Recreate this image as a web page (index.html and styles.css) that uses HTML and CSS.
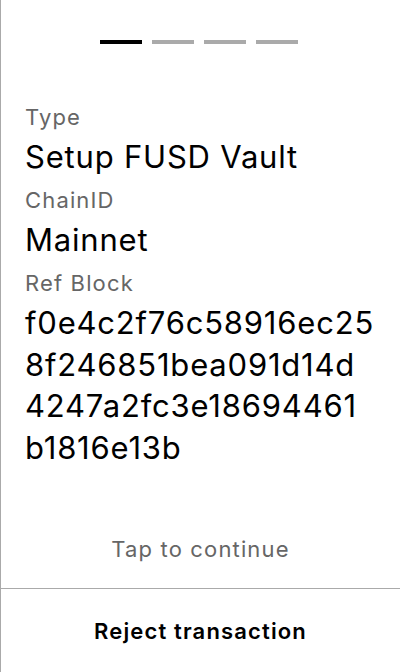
FILE: index.html
```html
<!DOCTYPE html>
<html>
<head>
<meta charset="utf-8">
<link rel="stylesheet" href="styles.css">
</head>
<body>
<div class="screen">
  <div class="steps">
    <span class="step active"></span>
    <span class="step"></span>
    <span class="step"></span>
    <span class="step"></span>
  </div>
  <div class="fields">
    <div class="field">
      <div class="label">Type</div>
      <div class="value">Setup FUSD Vault</div>
    </div>
    <div class="field">
      <div class="label">ChainID</div>
      <div class="value">Mainnet</div>
    </div>
    <div class="field">
      <div class="label">Ref Block</div>
      <div class="value hash"><span class="chunk">f0e4c2f76c58916ec25</span><span class="chunk">8f246851bea091d14d</span><span class="chunk">4247a2fc3e18694461</span><span class="chunk">b1816e13b</span></div>
    </div>
  </div>
  <div class="tap">Tap to continue</div>
  <div class="reject">Reject transaction</div>
</div>
</body>
</html>
```

FILE: styles.css
```css
html, body {
  margin: 0;
  padding: 0;
  background: #fff;
}
.screen {
  height: 672px;
  box-sizing: border-box;
  border-left: 1px solid #aaa;
  display: flex;
  flex-direction: column;
  font-family: Inter, "Noto Sans", sans-serif;
  color: #000;
}
.steps {
  display: flex;
  justify-content: center;
  gap: 10px;
  padding-top: 40px;
  padding-right: 3px;
}
.step {
  width: 42px;
  height: 4px;
  background: #aaa;
}
.step.active {
  background: #000;
}
.fields {
  padding: 0 24px;
  margin-top: 50.5px;
}
.field {
  margin-top: 4.5px;
}
.label {
  font-size: 22px;
  line-height: 37px;
  letter-spacing: 1.15px;
  color: #666;
}
.value {
  font-size: 31px;
  line-height: 41.6px;
  letter-spacing: 0.8px;
}
.chunk {
  display: block;
}
.tap {
  margin-top: auto;
  text-align: center;
  font-size: 22px;
  line-height: 28px;
  letter-spacing: 1.15px;
  color: #666;
  padding-bottom: 25px;
}
.reject {
  border-top: 1px solid #aaa;
  height: 83px;
  display: flex;
  align-items: center;
  justify-content: center;
  font-size: 22px;
  letter-spacing: 1.15px;
  font-weight: 600;
}
```
